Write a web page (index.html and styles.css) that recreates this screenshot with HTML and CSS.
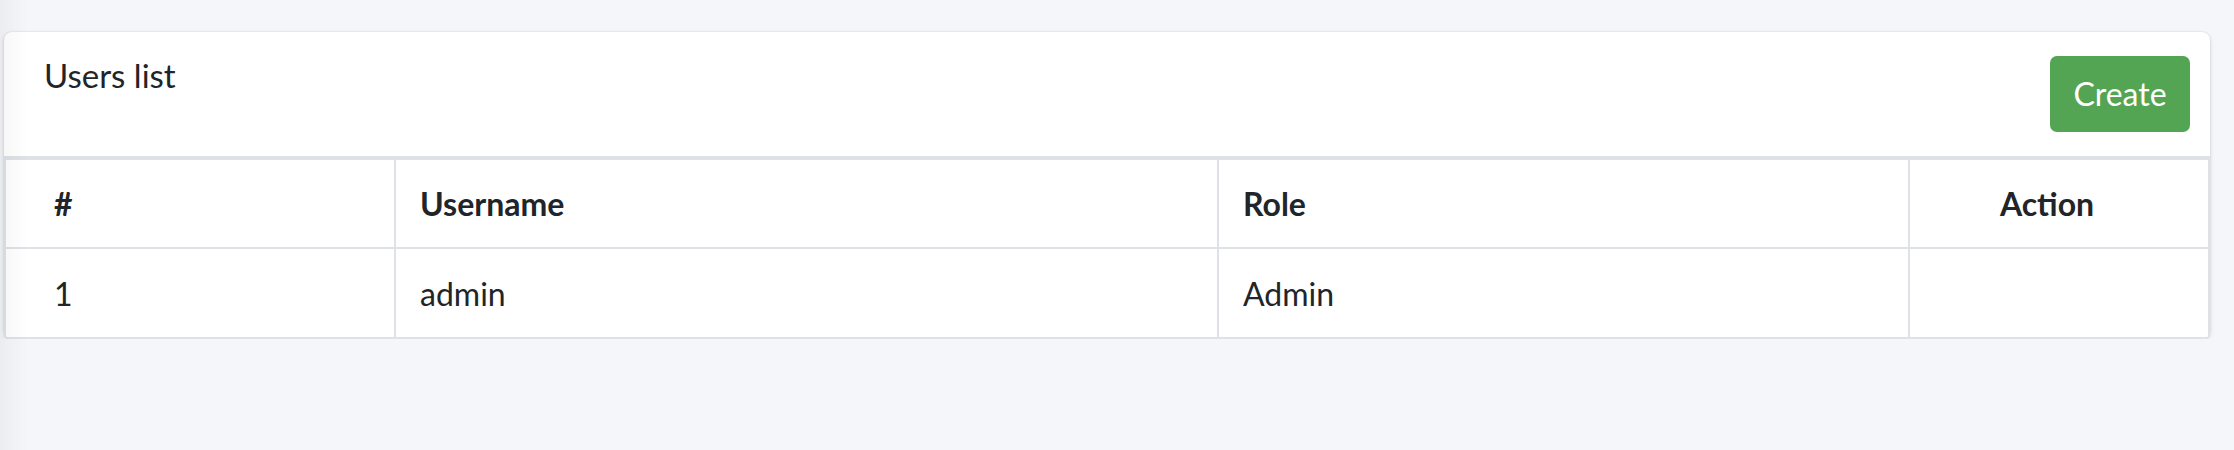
FILE: index.html
```html
<!DOCTYPE html>
<html lang="en">
<head>
<meta charset="utf-8">
<title>Users list</title>
<link rel="stylesheet" href="styles.css">
</head>
<body>
<div class="edge-shade"></div>
<div class="content">
  <div class="card">
    <div class="card-header">
      <h3 class="card-title">Users list</h3>
      <div class="card-tools">
        <button class="btn btn-success" type="button">Create</button>
      </div>
    </div>
    <div class="card-body">
      <table class="table">
        <thead>
          <tr>
            <th class="col-id">#</th>
            <th class="col-user">Username</th>
            <th class="col-role">Role</th>
            <th class="col-action">Action</th>
          </tr>
        </thead>
        <tbody>
          <tr>
            <td>1</td>
            <td>admin</td>
            <td>Admin</td>
            <td></td>
          </tr>
        </tbody>
      </table>
    </div>
  </div>
</div>
</body>
</html>
```

FILE: styles.css
```css
html, body {
  margin: 0;
  padding: 0;
}

body {
  background: #f4f6f9;
  font-family: Lato, "Liberation Sans", sans-serif;
  color: #212529;
}

.edge-shade {
  position: fixed;
  left: 0;
  top: 0;
  bottom: 0;
  width: 28px;
  background: linear-gradient(to right, rgba(0, 0, 0, 0.035), rgba(0, 0, 0, 0));
  pointer-events: none;
  z-index: 5;
}

.content {
  padding: 32px 24px 0 4px;
}

.card {
  background: #fff;
  border-radius: 8px;
  overflow: hidden;
  box-shadow: 0 0 2px rgba(0, 0, 0, 0.14), 0 2px 5px rgba(0, 0, 0, 0.12);
}

.card-header {
  display: flex;
  justify-content: space-between;
  align-items: flex-start;
  padding: 24px 20px 24px 40px;
  border-bottom: 2px solid #dee2e6;
}

.card-title {
  margin: 0;
  font-size: 33px;
  font-weight: 400;
  line-height: 38px;
}

.btn {
  box-sizing: border-box;
  width: 140px;
  height: 76px;
  border: none;
  border-radius: 7px;
  font-family: inherit;
  font-size: 32px;
  line-height: 48px;
  padding: 0;
  cursor: pointer;
}

.btn-success {
  background: #54a553;
  color: #fff;
}

.table {
  width: 100%;
  border-collapse: separate;
  border-spacing: 0;
  table-layout: fixed;
  border-left: 2px solid #dee2e6;
  border-top: 2px solid #dee2e6;
}

.table th,
.table td {
  height: 87px;
  padding: 0 24px;
  border-right: 2px solid #dee2e6;
  border-bottom: 2px solid #dee2e6;
  font-size: 32px;
  text-align: left;
  vertical-align: middle;
}

.table td {
  height: 88px;
}

.table th {
  font-weight: 700;
}

.table th:first-child,
.table td:first-child {
  padding-left: 48px;
}

.table th:last-child,
.table td:last-child {
  padding-right: 48px;
}

.col-id { box-sizing: border-box; width: 390px; }
.col-user { box-sizing: border-box; width: 823px; }
.col-role { box-sizing: border-box; width: 691px; }

.table .col-action {
  text-align: center;
}
```
